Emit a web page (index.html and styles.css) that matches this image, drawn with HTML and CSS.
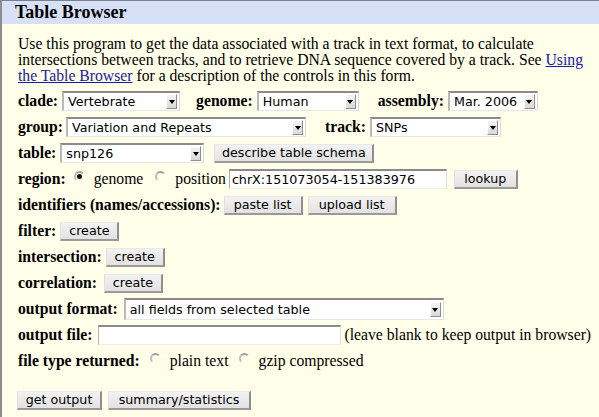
FILE: index.html
```html
<!DOCTYPE html>
<html>
<head>
<meta charset="utf-8">
<title>Table Browser</title>
<link rel="stylesheet" href="styles.css">
</head>
<body>
<div class="panel">
  <div class="header">Table Browser</div>
  <div class="content">
    <p class="intro">Use this program to get the data associated with a track in text format, to calculate intersections between tracks, and to retrieve DNA sequence covered by a track. See <a href="#">Using the Table Browser</a> for a description of the controls in this form.</p>

    <div class="row">
      <b class="lbl">clade:</b>
      <span class="select w-clade"><span class="val">Vertebrate</span><span class="arrow"></span></span>
      <b class="lbl g-genome">genome:</b>
      <span class="select w-genome"><span class="val">Human</span><span class="arrow"></span></span>
      <b class="lbl g-assembly">assembly:</b>
      <span class="select w-assembly"><span class="val">Mar. 2006</span><span class="arrow"></span></span>
    </div>

    <div class="row">
      <b class="lbl">group:</b>
      <span class="select w-group"><span class="val">Variation and Repeats</span><span class="arrow"></span></span>
      <b class="lbl g-track">track:</b>
      <span class="select w-track"><span class="val">SNPs</span><span class="arrow"></span></span>
    </div>

    <div class="row">
      <b class="lbl">table:</b>
      <span class="select w-table"><span class="val">snp126</span><span class="arrow"></span></span>
      <span class="btn b-schema">describe table schema</span>
    </div>

    <div class="row">
      <b class="lbl">region:</b>
      <span class="radio checked"></span><span class="rtext rt-gen">genome</span>
      <span class="radio"></span><span class="rtext rt-pos">position</span>
      <span class="input w-pos">chrX:151073054-151383976</span>
      <span class="btn b-lookup">lookup</span>
    </div>

    <div class="row">
      <b class="lbl">identifiers (names/accessions):</b>
      <span class="btn b-paste">paste list</span>
      <span class="btn b-upload">upload list</span>
    </div>

    <div class="row">
      <b class="lbl">filter:</b>
      <span class="btn b-create b-filter">create</span>
    </div>

    <div class="row">
      <b class="lbl">intersection:</b>
      <span class="btn b-create">create</span>
    </div>

    <div class="row">
      <b class="lbl">correlation:</b>
      <span class="btn b-create b-corr">create</span>
    </div>

    <div class="row">
      <b class="lbl">output format:</b>
      <span class="select w-format"><span class="val">all fields from selected table</span><span class="arrow"></span></span>
    </div>

    <div class="row">
      <b class="lbl">output file:</b>
      <span class="input w-file"></span>
      <span class="note">(leave blank to keep output in browser)</span>
    </div>

    <div class="row">
      <b class="lbl">file type returned:</b>
      <span class="radio r-ft"></span><span class="rtext rt-ft">plain text</span>
      <span class="radio"></span><span class="rtext">gzip compressed</span>
    </div>

    <div class="row actions">
      <span class="btn b-get">get output</span>
      <span class="btn b-summary">summary/statistics</span>
    </div>
  </div>
</div>
</body>
</html>
```

FILE: styles.css
```css
html, body {
  margin: 0;
  padding: 0;
  background: #fffee8;
}
body {
  font-family: "Liberation Serif", "Times New Roman", serif;
  font-size: 15.7px;
  color: #000;
  width: 599px;
  height: 417px;
  overflow: hidden;
}
.panel {
  border-top: 1px solid #7b818c;
  border-left: 2px solid #8c8c8c;
  min-height: 416px;
  background: #fffee8;
}
.header {
  background: #d6e1f7;
  height: 23px;
  line-height: 22px;
  padding-left: 13px;
  font-weight: bold;
  font-size: 18px;
}
.content {
  padding: 12px 0 0 16px;
}
.intro {
  margin: 0 0 4px 0;
  line-height: 16px;
}
.intro a {
  color: #1a1aa6;
  text-decoration: underline;
}
.row {
  display: flex;
  align-items: center;
  height: 26px;
  white-space: nowrap;
}
.lbl {
  font-weight: bold;
  margin-right: 4px;
}
.g-genome { margin-left: 16px; }
.g-assembly { margin-left: 19px; }
.g-track { margin-left: 19px; }

.select {
  position: relative;
  display: flex;
  align-items: center;
  height: 20px;
  box-sizing: border-box;
  background: #fff;
  border-top: 2px solid #8a8a8a;
  border-left: 2px solid #b9b9b9;
  border-right: 1px solid #d8d8d8;
  border-bottom: 1px solid #e6e6e6;
  font-family: "DejaVu Sans", sans-serif;
  font-size: 12.7px;
  padding-left: 4px;
}
.select .val { flex: 1; }
.select .arrow {
  width: 11px;
  height: 15px;
  margin-right: 2px;
  background: linear-gradient(#f4f4f4, #d9d9d9);
  border-right: 1px solid #8d8d8d;
  border-bottom: 1px solid #8d8d8d;
  border-top: 1px solid #fff;
  border-left: 1px solid #fff;
  box-sizing: border-box;
  display: flex;
  align-items: center;
  justify-content: center;
}
.select .arrow::after {
  content: "";
  border-left: 3px solid transparent;
  border-right: 3px solid transparent;
  border-top: 4px solid #000;
  margin-top: 1px;
}
.w-clade { width: 118px; }
.w-genome { width: 102px; }
.w-assembly { width: 90px; }
.w-group { width: 240px; margin-left: -1px; }
.w-track { width: 131px; }
.w-table { width: 144px; }
.w-format { width: 320px; height: 22px; margin-left: 2px; }

.btn {
  display: inline-flex;
  align-items: center;
  justify-content: center;
  height: 19px;
  box-sizing: border-box;
  font-family: "DejaVu Sans", sans-serif;
  font-size: 12.7px;
  background: linear-gradient(#f2f2f2, #e2e2e2);
  border-top: 1px solid #e8e8e8;
  border-left: 1px solid #e0e0e0;
  border-right: 2px solid #8f8f8f;
  border-bottom: 2px solid #9a9a9a;
  margin-left: 5px;
}
.b-schema { width: 160px; margin-left: 10px; }
.b-lookup { width: 64px; margin-left: 7px; }
.b-paste { width: 79px; margin-left: -1px; }
.b-upload { width: 89px; }
.b-create { width: 59px; margin-left: 0; }
.b-filter { margin-left: 0; }
.b-corr { margin-left: 3px; }
.actions { margin-top: 13px; }
.b-get { width: 85px; margin-left: -1px; }
.b-summary { width: 143px; margin-left: 6px; }

.radio {
  display: inline-block;
  width: 7px;
  height: 7px;
  border-radius: 50%;
  border: 2px solid transparent;
  border-top-color: #a0a0a0;
  border-left-color: #c0c0c0;
  position: relative;
  margin: 0 9px 0 4px;
  transform: translateY(-3px);
}
.r-ft { margin-left: 6px; }
.radio.checked::after {
  content: "";
  position: absolute;
  left: 1px;
  top: 1px;
  width: 5px;
  height: 5px;
  border-radius: 50%;
  background: #111;
}
.rtext { margin-right: 10px; }
.rt-gen { margin-right: 8px; }
.rt-ft { margin-right: 6px; }
.rt-pos { margin-right: 8px; }

.input {
  display: flex;
  align-items: center;
  height: 20px;
  box-sizing: border-box;
  background: #fff;
  border-top: 2px solid #8a8a8a;
  border-left: 1px solid #b0b0b0;
  border-right: 1px solid #e0e0e0;
  border-bottom: 1px solid #eeeeee;
  font-family: "DejaVu Sans", sans-serif;
  font-size: 12.7px;
  padding-left: 2px;
}
.w-pos { width: 218px; margin-left: -5px; }
.w-file { width: 243px; margin-left: 1px; }
.note { margin-left: 4px; }
```
